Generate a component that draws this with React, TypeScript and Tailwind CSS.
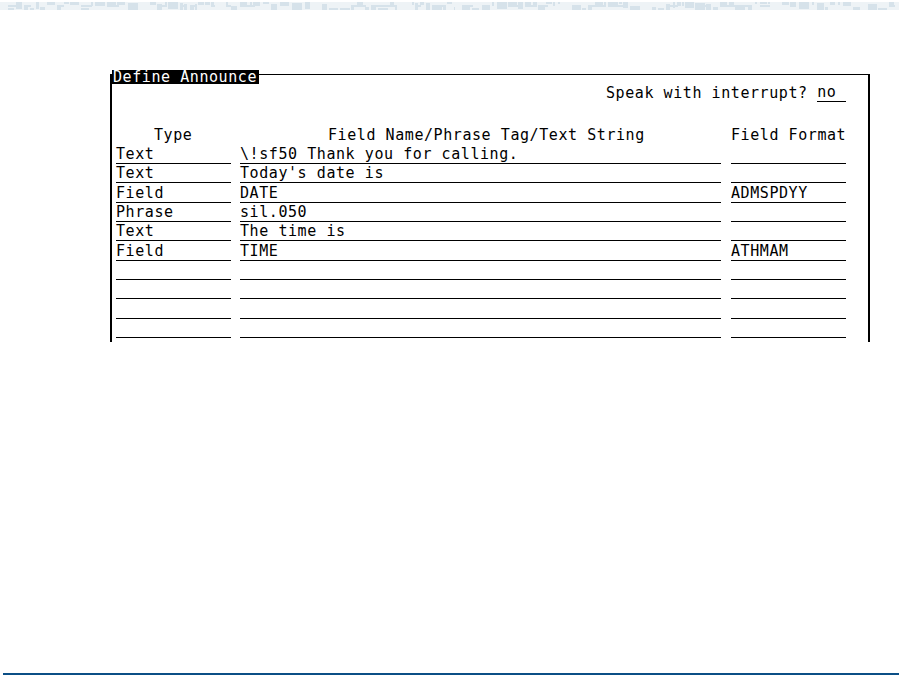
import React from "react";

const rows = [
  { type: "Text", name: "\\!sf50 Thank you for calling.", format: "" },
  { type: "Text", name: "Today's date is", format: "" },
  { type: "Field", name: "DATE", format: "ADMSPDYY" },
  { type: "Phrase", name: "sil.050", format: "" },
  { type: "Text", name: "The time is", format: "" },
  { type: "Field", name: "TIME", format: "ATHMAM" },
  { type: "", name: "", format: "" },
  { type: "", name: "", format: "" },
  { type: "", name: "", format: "" },
  { type: "", name: "", format: "" },
];

// faded header strip: blocky shapes like a washed-out banner
function HeaderStrip() {
  const rects: { x: number; y: number; w: number; h: number }[] = [];
  let seed = 7;
  const rand = () => {
    seed = (seed * 9301 + 49297) % 233280;
    return seed / 233280;
  };
  const groups = [
    [8, 140],
    [150, 215],
    [226, 310],
    [322, 400],
    [412, 455],
    [462, 560],
    [572, 640],
    [652, 770],
    [782, 860],
    [868, 895],
  ];
  for (const [a, b] of groups) {
    let x = a;
    while (x < b) {
      const w = 2 + Math.floor(rand() * 9);
      const top = rand() < 0.5;
      const h = 2 + Math.floor(rand() * 6);
      rects.push({ x, y: top ? 0 : 8 - h, w: Math.min(w, b - x), h });
      if (rand() < 0.35) rects.push({ x, y: 3, w: Math.min(w + 3, b - x), h: 2 });
      x += w + 1 + Math.floor(rand() * 3);
    }
  }
  return (
    <svg width="899" height="8" viewBox="0 0 899 8" className="block">
      <rect x="0" y="0" width="899" height="8" fill="#eef3f6" />
      {rects.map((r, i) => (
        <rect key={i} x={r.x} y={r.y} width={r.w} height={r.h} fill="#d6e2ea" />
      ))}
    </svg>
  );
}

export default function App() {
  return (
    <div className="w-[899px] h-[675px] bg-white flex flex-col overflow-hidden text-black font-['DejaVu_Sans_Mono','Liberation_Mono',monospace] text-[15px] tracking-[0.57px]">
      <div className="mt-[2px]">
        <HeaderStrip />
      </div>

      {/* Define Announce frame */}
      <div className="relative ml-[110px] mt-[64px] w-[760px] h-[268px] border-t border-l-2 border-r-2 border-black">
        <div className="absolute -top-[5px] left-0 h-[14px] w-[147px] bg-black text-white leading-[14px] pl-[1px] whitespace-pre">
          Define Announce
        </div>

        <div className="h-[27px] flex items-end pl-[494px] leading-none whitespace-pre">
          <span className="pb-[1px]">Speak with interrupt? </span>
          <span className="pb-[1px] border-b border-black">no </span>
        </div>

        <div className="h-[41px] flex items-end leading-none whitespace-pre">
          <div className="ml-[4px] w-[115px] pl-[38px]">Type</div>
          <div className="ml-[9px] w-[481px] pl-[88px]">Field Name/Phrase Tag/Text String</div>
          <div className="ml-[10px] w-[115px]">Field Format</div>
        </div>

        <div className="mt-[1.67px]">
          {rows.map((row, i) => (
            <div key={i} className="h-[19.33px] flex leading-none whitespace-pre">
              <div className="ml-[4px] w-[115px] flex items-end pb-[1px] border-b border-black">{row.type}</div>
              <div className="ml-[9px] w-[481px] flex items-end pb-[1px] border-b border-black">{row.name}</div>
              <div className="ml-[10px] w-[115px] flex items-end pb-[1px] border-b border-black">{row.format}</div>
            </div>
          ))}
        </div>
      </div>

      <div className="mt-auto ml-[3px] h-[2px] bg-[#0b4f86]" />
    </div>
  );
}
